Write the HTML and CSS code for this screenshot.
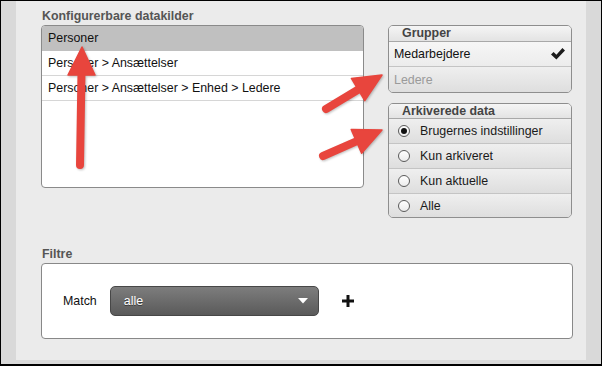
FILE: index.html
```html
<!DOCTYPE html>
<html lang="da">
<head>
<meta charset="utf-8">
<title>Datakilder</title>
<link rel="stylesheet" href="styles.css">
</head>
<body>
<div class="frame">
  <div class="panel">
    <div class="top">
      <section class="sources">
        <h2 class="label">Konfigurerbare datakilder</h2>
        <ul class="list">
          <li class="item selected">Personer</li>
          <li class="item">Personer &gt; Ansættelser</li>
          <li class="item">Personer &gt; Ansættelser &gt; Enhed &gt; Ledere</li>
        </ul>
      </section>
      <aside class="side">
        <div class="group">
          <div class="group-head">Grupper</div>
          <div class="opt opt-on"><span>Medarbejdere</span><svg class="check" width="14" height="12" viewBox="0 0 14 12"><polygon points="0,6.5 2.6,4 5.4,6.8 11.4,0 14,2.4 5.4,11.5" fill="#1c1c1c"/></svg></div>
          <div class="opt opt-off">Ledere</div>
        </div>
        <div class="group group-second">
          <div class="group-head">Arkiverede data</div>
          <div class="opt radio-row"><span class="radio on"></span>Brugernes indstillinger</div>
          <div class="opt radio-row"><span class="radio"></span>Kun arkiveret</div>
          <div class="opt radio-row"><span class="radio"></span>Kun aktuelle</div>
          <div class="opt radio-row"><span class="radio"></span>Alle</div>
        </div>
      </aside>
    </div>
    <section class="filters">
      <h2 class="label">Filtre</h2>
      <div class="filter-box">
        <span class="match">Match</span>
        <div class="select">
          <span class="select-text">alle</span>
          <svg class="caret" width="10" height="6" viewBox="0 0 10 6"><polygon points="0,0 10,0 5,5.5" fill="#fff"/></svg>
        </div>
        <svg class="plus" width="12" height="12" viewBox="0 0 12 12"><rect x="0" y="4.5" width="12" height="3" fill="#111"/><rect x="4.5" y="0" width="3" height="12" fill="#111"/></svg>
      </div>
    </section>
  </div>
  <svg class="arrows" width="602" height="366" viewBox="0 0 602 366">
    <g fill="#e8453d" stroke="#e8453d" stroke-linecap="round" stroke-linejoin="round">
      <line x1="80" y1="165" x2="81.5" y2="72" stroke-width="8"/>
      <polygon points="82,47 95,75 68,75" stroke-width="1.5"/>
      <line x1="326" y1="109" x2="360" y2="88.5" stroke-width="8"/>
      <polygon points="382,75 364.8,100.6 351.4,78.4" stroke-width="1.5"/>
      <line x1="323" y1="156" x2="358" y2="140.6" stroke-width="8"/>
      <polygon points="382,130 361.6,153.2 351.2,129.4" stroke-width="1.5"/>
    </g>
  </svg>
</div>
</body>
</html>
```

FILE: styles.css
```css
* { box-sizing: border-box; }

body {
  margin: 0;
  font-family: "Liberation Sans", Arial, sans-serif;
  color: #111;
}

.frame {
  position: relative;
  width: 602px;
  height: 366px;
  border: 1px solid #000;
  border-bottom-width: 2px;
  padding: 0 15px 4px 15px;
  background: #d9d9d9;
}

.panel {
  height: 100%;
  background: #ebebeb;
  padding: 7px 13px 0 25px;
}

.top {
  display: flex;
  gap: 24px;
}

.sources { width: 323px; }

.label {
  margin: 0 0 1px 1px;
  font-size: 12.4px;
  line-height: 16px;
  font-weight: bold;
  color: #555;
}

.list {
  list-style: none;
  margin: 0;
  padding: 0;
  height: 163px;
  background: #fff;
  border: 1px solid #8a8a8a;
  border-radius: 4px;
  overflow: hidden;
}

.item {
  height: 25px;
  line-height: 24px;
  padding-left: 6px;
  font-size: 12.4px;
  color: #111;
  border-bottom: 1px solid #d6d6d6;
}

.item.selected {
  background: #c0c0c0;
  border-bottom-color: #c0c0c0;
}

.side {
  width: 184px;
  padding-top: 17px;
}

.group {
  border: 1px solid #8e8e8e;
  border-radius: 5px;
  overflow: hidden;
  background: #e6e6e6;
}

.group-second { margin-top: 10px; }

.group-head {
  height: 16px;
  line-height: 15px;
  padding-left: 13px;
  font-size: 12.4px;
  font-weight: bold;
  color: #444;
  background: linear-gradient(#f5f5f5, #e3e3e3);
  border-bottom: 1px solid #a8a8a8;
}

.group-second .group-head {
  height: 15px;
  line-height: 14px;
}

.opt {
  display: flex;
  align-items: center;
  height: 25px;
  padding: 0 6px 0 5px;
  font-size: 12.4px;
  color: #111;
  border-bottom: 1px solid #c4c4c4;
  background: linear-gradient(#efefef, #dedede);
}

.opt:last-child { border-bottom: 0; }

.group-second .opt:last-child { height: 23px; }

.opt-on {
  justify-content: space-between;
  background: linear-gradient(#f6f6f6, #ececec);
}

.opt-off { color: #9a9a9a; }

.check { display: block; }

.radio-row {
  padding-left: 9px;
  gap: 10px;
  color: #1a1a1a;
}

.radio {
  position: relative;
  width: 12px;
  height: 12px;
  border: 1px solid #5a5a5a;
  border-radius: 50%;
  background: linear-gradient(#ffffff, #ececec);
  flex: none;
}

.radio.on::after {
  content: "";
  position: absolute;
  left: 2px;
  top: 2px;
  width: 6px;
  height: 6px;
  border-radius: 50%;
  background: #111;
}

.filters { margin-top: 28px; }

.filter-box {
  display: flex;
  align-items: center;
  height: 76px;
  padding-left: 21px;
  background: #fff;
  border: 1px solid #888;
  border-radius: 4px;
}

.match {
  font-size: 12.4px;
  color: #111;
}

.select {
  display: flex;
  align-items: center;
  justify-content: space-between;
  width: 209px;
  height: 30px;
  margin-left: 13px;
  padding: 0 10px 0 13px;
  background: linear-gradient(#7d7d7d, #5a5a5a);
  border: 1px solid #474747;
  border-radius: 5px;
}

.select-text {
  font-size: 12.4px;
  color: #fff;
  text-shadow: 0 1px 0 #3a3a3a;
}

.caret { display: block; }

.plus {
  display: block;
  margin-left: 23px;
}

.arrows {
  position: absolute;
  left: -1px;
  top: -1px;
  pointer-events: none;
  filter: drop-shadow(1px 1px 1px rgba(0,0,0,0.25));
}
```
